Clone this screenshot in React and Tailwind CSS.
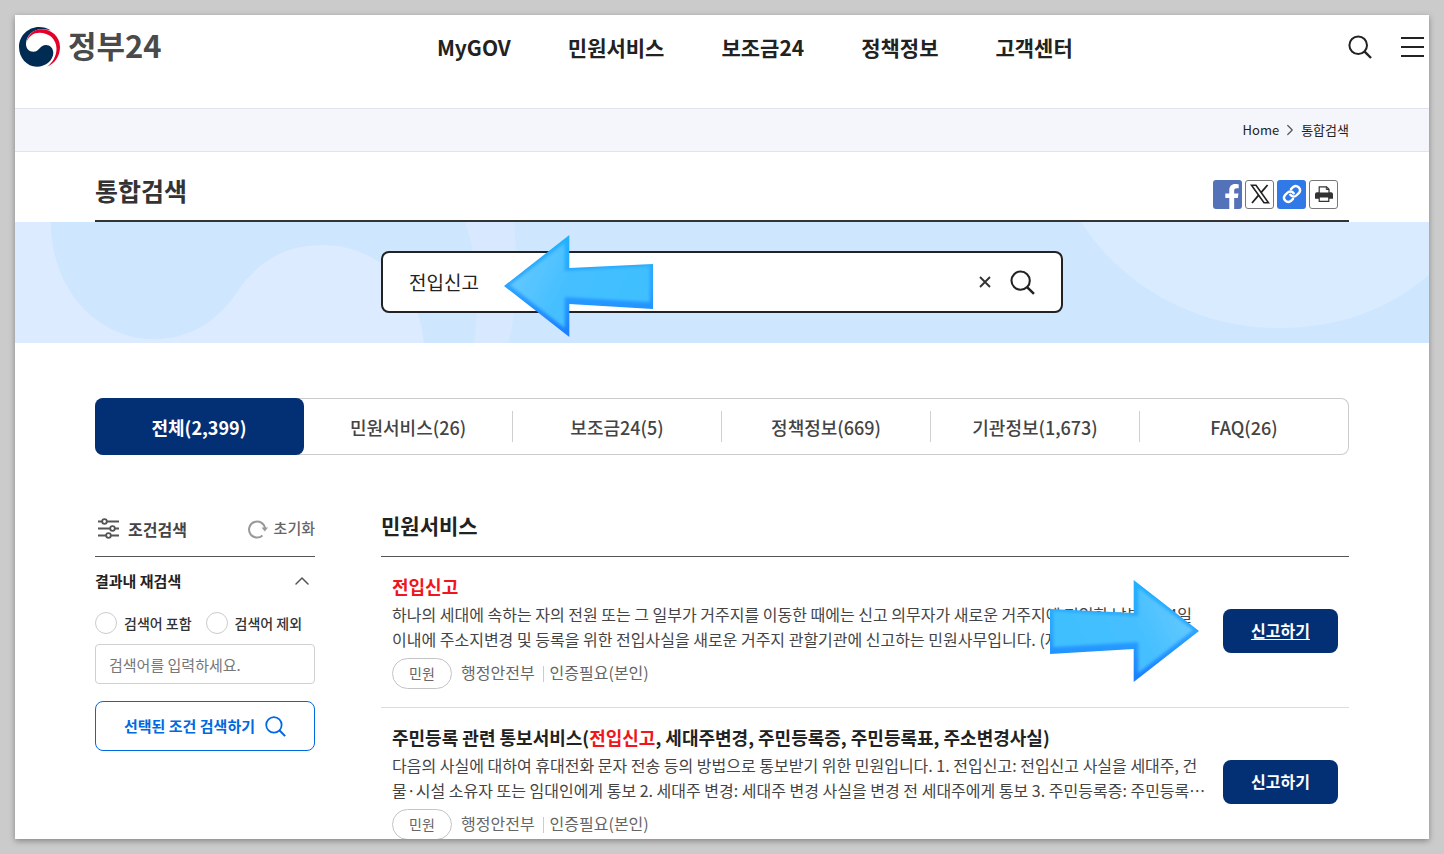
import React, { useState } from 'react';
import { FaFacebookF } from 'react-icons/fa';
import { ChevronRight, ChevronUp } from 'lucide-react';

const menus = ['MyGOV', '민원서비스', '보조금24', '정책정보', '고객센터'];

const tabs = [
    { id: 'all', label: '전체(2,399)' },
    { id: 'service', label: '민원서비스(26)' },
    { id: 'subsidy', label: '보조금24(5)' },
    { id: 'policy', label: '정책정보(669)' },
    { id: 'agency', label: '기관정보(1,673)' },
    { id: 'faq', label: 'FAQ(26)' },
];

const results = [
    {
        id: 1,
        title: ['', '전입신고', ''],
        lines: [
            '하나의 세대에 속하는 자의 전원 또는 그 일부가 거주지를 이동한 때에는 신고 의무자가 새로운 거주지에 전입한 날부터 14일',
            '이내에 주소지변경 및 등록을 위한 전입사실을 새로운 거주지 관할기관에 신고하는 민원사무입니다. (자세한 내용은 안내…',
        ],
        active: true,
    },
    {
        id: 2,
        title: ['주민등록 관련 통보서비스(', '전입신고', ', 세대주변경, 주민등록증, 주민등록표, 주소변경사실)'],
        lines: [
            '다음의 사실에 대하여 휴대전화 문자 전송 등의 방법으로 통보받기 위한 민원입니다. 1. 전입신고: 전입신고 사실을 세대주, 건',
            '물·시설 소유자 또는 임대인에게 통보 2. 세대주 변경: 세대주 변경 사실을 변경 전 세대주에게 통보 3. 주민등록증: 주민등록…',
        ],
        active: false,
    },
];

function SearchIcon({ className }) {
    return (
        <svg viewBox="0 0 24 24" fill="none" stroke="currentColor" strokeWidth="2" className={className}>
            <circle cx="10.2" cy="10.2" r="8.8" />
            <path d="M16.4 16.4 23 23" strokeWidth="2.4" />
        </svg>
    );
}

function Logo() {
    return (
        <svg viewBox="0 0 41 40" className="h-10 w-[41px]">
            <path d="M32 3.5C28.5 1 24 0 20 0 9 0 0 9 0 20s8 19.7 17.7 19.7C27 39.7 34.3 33 34.3 26c0-5-3.3-8-7.3-8-6 0-6.5 6.7-12.7 6.7C10 24.7 7 21.5 7 17 7 9 14 2.3 22 2.3c4 0 7 .3 10 1.2Z" fill="#002c54" />
            <path d="M7.5 15C9 7.5 15 2.3 22 2.3 33 2.3 41 10 41 20c0 9-5 16.5-13 19.7 6-4.5 9.500-11 9.500-18C37.500 12 30 5.700 20.500 5.700 14.500 5.700 10 9 7.500 15Z" fill="#e4002b" />
        </svg>
    );
}

function Arrow({ className, id }) {
    return (
        <svg viewBox="0 0 150 103" className={className} aria-hidden="true">
            <defs>
                <linearGradient id={id + '-body'} x1="0" y1="0" x2="1" y2="0.3">
                    <stop offset="0" stopColor="#6ccbff" />
                    <stop offset="0.5" stopColor="#45bfff" />
                    <stop offset="1" stopColor="#40bfff" />
                </linearGradient>
                <linearGradient id={id + '-edge'} x1="0" y1="0" x2="0" y2="1">
                    <stop offset="0" stopColor="#22b2ff" />
                    <stop offset="0.5" stopColor="#2aa4ff" />
                    <stop offset="1" stopColor="#1a7cff" />
                </linearGradient>
                <filter id={id + '-soft'} x="-10%" y="-10%" width="120%" height="120%">
                    <feGaussianBlur stdDeviation="1.6" />
                </filter>
                <clipPath id={id + '-clip'}>
                    <path d="M0 51 57 0V33L130 29V74L57 69V102Z" />
                </clipPath>
            </defs>
            <g clipPath={`url(#${id}-clip)`} transform="scale(1.146 1)">
                <rect width="150" height="103" fill={`url(#${id}-edge)`} />
                <path
                    d="M5 50 53 8V36L127 31V67L53 62V93Z"
                    fill={`url(#${id}-body)`}
                    filter={`url(#${id}-soft)`}
                />
            </g>
        </svg>
    );
}

function Header() {
    return (
        <header className="relative flex h-[93px] items-start justify-between pt-3 pr-[5px] pl-1">
            <a href="#home" className="flex items-start gap-2">
                <Logo />
                <span className="text-[31px] leading-9 font-bold text-[#4a4a4a]">정부24</span>
            </a>
            <nav className="flex gap-[57px] pt-1">
                {menus.map((menu) => (
                    <a key={menu} href={'#' + menu} className="text-[21px] leading-8 font-bold text-[#222]">
                        {menu}
                    </a>
                ))}
            </nav>
            <div className="flex items-center gap-7 pt-2 text-[#222]">
                <button type="button" aria-label="검색">
                    <SearchIcon className="h-6 w-6" />
                </button>
                <button type="button" aria-label="전체메뉴">
                    <svg viewBox="0 0 24 24" className="h-6 w-6" stroke="currentColor" strokeWidth="2">
                        <path d="M1 3h23M1 12h23M1 21h23" />
                    </svg>
                </button>
            </div>
        </header>
    );
}

function ShareButtons() {
    return (
        <div className="flex gap-[3px] pr-[11px]">
            <button type="button" aria-label="페이스북" className="flex h-[29px] w-[29px] items-end justify-center overflow-hidden rounded-[3px] bg-[#5472b8] pl-2 text-white">
                <FaFacebookF className="h-[25px] w-4" />
            </button>
            <button type="button" aria-label="X" className="flex h-[29px] w-[29px] items-center justify-center rounded-[3px] border border-[#777] bg-white">
                <svg viewBox="0 0 20 20" className="h-5 w-5" fill="none" stroke="#222">
                    <path d="M1.5 1.2H6L18.5 18.8H14Z" strokeWidth="1.6" />
                    <path d="M17.6 1 11 8.6M8.7 11.2 2 19" strokeWidth="1.8" />
                </svg>
            </button>
            <button type="button" aria-label="링크 복사" className="flex h-[29px] w-[29px] items-center justify-center rounded-[3px] bg-[#3079e6] text-white">
                <svg viewBox="0 0 24 24" className="h-5 w-5" fill="none" stroke="currentColor" strokeWidth="2.9" strokeLinecap="round">
                    <path d="M10 13a5 5 0 0 0 7.5.5l3-3a5 5 0 0 0-7-7l-2.7 2.7" />
                    <path d="M14 11a5 5 0 0 0-7.5-.5l-3 3a5 5 0 0 0 7 7l2.7-2.7" />
                </svg>
            </button>
            <button type="button" aria-label="인쇄" className="flex h-[29px] w-[29px] items-center justify-center rounded-[3px] border border-[#777] bg-white">
                <svg viewBox="0 0 18 16" className="h-4 w-[18px]">
                    <path d="M2 6.2h14a2 2 0 0 1 2 2v4.500H0V8.200a2 2 0 0 1 2-2Z" fill="#333" />
                    <path d="M4.200 7V.800h7.300L14 3.300V7Z" fill="#fff" stroke="#333" strokeWidth="1.2" />
                    <path d="M11.300 .8v2.700H14" fill="none" stroke="#333" />
                    <path d="M3 7h12v3H3z" fill="#333" />
                    <path d="M4.200 11h9.600v4.300H4.200z" fill="#fff" stroke="#333" strokeWidth="1.2" />
                </svg>
            </button>
        </div>
    );
}

function SearchBanner() {
    const [keyword, setKeyword] = useState('전입신고');

    return (
        <section className="relative bg-[#cfe6ff] px-20 pt-[29px] pb-[30px]">
            <svg viewBox="0 0 1414 121" preserveAspectRatio="xMidYMid slice" className="absolute inset-0 h-full w-full">
                <path d="M0 0H36C36 70 85 117 138 117C178 117 205 97 226 64C250 33 276 23 307 23C360 23 403 60 409 121H0Z" fill="#dcebff" />
                {/* left blob sits on top of the pale area */}
                <path d="M36 0C36 70 85 117 138 117C178 117 205 97 226 64C250 33 276 23 307 23V0Z" fill="#cfe6ff" />
                <path d="M450 0C464 40 464 85 459 121H493C504 80 502 40 499 0Z" fill="#d8e9ff" />
                <path d="M1066 0C1105 62 1180 106 1262 106C1325 106 1372 88 1414 53V0Z" fill="#d9ebff" />
            </svg>
            <form
                className="relative mx-auto flex h-[62px] max-w-[682px] items-center rounded-lg border-2 border-[#222] bg-white pr-[26px] pl-[26px]"
                onSubmit={(e) => e.preventDefault()}
            >
                <input
                    type="text"
                    aria-label="통합검색어"
                    value={keyword}
                    onChange={(e) => setKeyword(e.target.value)}
                    className="min-w-0 flex-1 text-[19px] text-[#222] outline-none"
                />
                <button type="button" aria-label="지우기" onClick={() => setKeyword('')} className="mr-[19px]">
                    <svg viewBox="0 0 12 12" className="h-3 w-3" stroke="#333" strokeWidth="1.9">
                        <path d="M1 1 11 11M11 1 1 11" />
                    </svg>
                </button>
                <button type="submit" aria-label="검색" className="text-[#222]">
                    <SearchIcon className="h-[25px] w-[25px]" />
                </button>
                <Arrow id="arrow-search" className="absolute top-[-18px] left-[121px] h-[103px] w-[150px]" />
            </form>
        </section>
    );
}

function Tabs() {
    const [current, setCurrent] = useState('all');

    return (
        <div className="mt-[55px] flex h-[57px] items-stretch rounded-lg bg-white shadow-[inset_0_0_0_1px_#ccc]">
            {tabs.map((tab, i) => (
                <button
                    key={tab.id}
                    type="button"
                    onClick={() => setCurrent(tab.id)}
                    className={`flex flex-1 items-center text-lg ${current === tab.id
                        ? 'rounded-lg bg-[#032f74] font-bold text-white'
                        : 'font-medium text-[#444]'
                        }`}
                >
                    <span
                        className={`flex h-[31px] flex-1 items-center justify-center border-r ${current === tab.id || i === tabs.length - 1
                            ? 'border-transparent'
                            : 'border-[#d0d0d0]'
                            }`}
                    >
                        {tab.label}
                    </span>
                </button>
            ))}
        </div>
    );
}

function Filter() {
    return (
        <aside className="w-[220px] shrink-0">
            <div className="flex h-[54px] items-center justify-between border-b border-[#555] pb-0.5">
                <h2 className="flex items-center gap-[9px] pl-[3px] text-base font-bold text-[#444]">
                    <svg viewBox="0 0 21 21" className="h-[21px] w-[21px]" fill="#fff" stroke="#555" strokeWidth="1.8">
                        <path d="M0 3.5h21M0 10.5h21M0 17.5h21" />
                        <circle cx="6.5" cy="3.5" r="2.3" />
                        <circle cx="14.5" cy="10.5" r="2.3" />
                        <circle cx="10.5" cy="17.5" r="2.3" />
                    </svg>
                    조건검색
                </h2>
                <button type="button" className="flex items-center gap-1.5 text-[15px] font-medium text-[#666]">
                    <svg viewBox="0 0 20 20" className="h-5 w-5" fill="none" stroke="#999" strokeWidth="2">
                        <path d="M14.5 16.4A8 8 0 1 1 17 9.5" />
                        <path d="M13.5 8.5h6.5L16.8 12.5Z" fill="#999" stroke="none" />
                    </svg>
                    초기화
                </button>
            </div>
            <button type="button" className="flex h-12 w-full items-center justify-between pr-px text-[15px] font-bold text-[#222]">
                결과내 재검색
                <ChevronUp className="h-6 w-6 text-[#555]" strokeWidth={1.5} />
            </button>
            <div className="mt-[7px] flex h-[22px] items-center gap-[14px] text-sm font-medium text-[#333]">
                <label className="flex items-center gap-[7px]">
                    <input type="radio" name="scope" className="h-[22px] w-[22px] appearance-none rounded-full border border-[#ccc] bg-white checked:border-[6px] checked:border-[#0067d9]" />
                    검색어 포함
                </label>
                <label className="flex items-center gap-[7px]">
                    <input type="radio" name="scope" className="h-[22px] w-[22px] appearance-none rounded-full border border-[#ccc] bg-white checked:border-[6px] checked:border-[#0067d9]" />
                    검색어 제외
                </label>
            </div>
            <input
                type="text"
                aria-label="검색어"
                placeholder="검색어를 입력하세요."
                className="mt-2.5 h-10 w-full rounded border border-[#d0d0d0] px-[13px] text-[15px] text-[#333] placeholder:text-[#777]"
            />
            <button type="button" className="mt-[17px] flex h-[50px] w-full items-center justify-center gap-2.5 rounded-lg border border-[#0068e0] text-[15px] font-bold text-[#0068e0]">
                선택된 조건 검색하기
                <SearchIcon className="h-[21px] w-[21px]" />
            </button>
        </aside>
    );
}

function ResultItem({ item }) {
    const [before, keyword, after] = item.title;

    return (
        <li className="relative flex items-center justify-between border-b border-[#ddd] px-[11px] pt-[15px] pb-[18px]">
            <div className="min-w-0">
                <h3 className="text-lg leading-7 font-bold text-[#222]">
                    <a href="#detail">
                        {before}
                        <span className="text-[#f0161d]">{keyword}</span>
                        {after}
                    </a>
                </h3>
                <p className="mt-0.5 text-base leading-[25px] whitespace-nowrap text-[#444]">
                    {item.lines[0]}
                    <br />
                    {item.lines[1]}
                </p>
                <div className="mt-1.5 flex items-center text-base text-[#666]">
                    <span className="flex h-[31px] w-[60px] items-center justify-center rounded-full border border-[#c4c4c4] pb-0.5 text-sm">
                        민원
                    </span>
                    <span className="ml-[9px] pb-[3px]">행정안전부</span>
                    <span className="ml-2 h-4 border-l border-[#ccc]" />
                    <span className="ml-1.5 pb-[3px]">인증필요(본인)</span>
                </div>
            </div>
            <button
                type="button"
                className={`h-11 w-[115px] shrink-0 rounded-lg bg-[#032f74] pb-0.5 text-base font-bold text-white ${item.active ? 'underline underline-offset-2' : ''
                    }`}
            >
                신고하기
            </button>
            {item.active && (
                <Arrow id="arrow-apply" className="absolute top-[23px] right-[150px] h-[103px] w-[150px] -scale-x-100" />
            )}
        </li>
    );
}

function App() {
    return (
        <div className="flex h-screen flex-col bg-[#cbcbcb] p-[15px] font-['Noto_Sans_CJK_KR',sans-serif]">
            <div className="flex-1 overflow-hidden bg-white shadow-[0_2px_6px_rgba(0,0,0,0.35)]">
                <Header />

                {/* Breadcrumb */}
                <div className="flex h-11 items-center justify-end gap-0.5 border-y border-[#e1e4ee] bg-[#f5f6fb] px-20 text-[13px] text-[#222]">
                    <a href="#home">Home</a>
                    <ChevronRight className="h-[18px] w-[18px] text-[#555]" strokeWidth={1.6} />
                    <span>통합검색</span>
                </div>

                <div className="px-20">
                    <div className="flex h-[70px] items-center justify-between border-b-2 border-[#333] pt-4">
                        <h1 className="pb-2 text-[25px] leading-9 font-bold text-[#333]">통합검색</h1>
                        <ShareButtons />
                    </div>
                </div>

                <SearchBanner />

                <main className="px-20">
                    <Tabs />
                    <div className="mt-12 flex gap-[66px]">
                        <Filter />
                        <section className="min-w-0 flex-1">
                            <h2 className="flex h-[54px] items-center border-b border-[#555] pb-2 text-[21px] font-bold text-[#222]">
                                민원서비스
                            </h2>
                            <ul>
                                {results.map((item) => (
                                    <ResultItem key={item.id} item={item} />
                                ))}
                            </ul>
                        </section>
                    </div>
                </main>
            </div>
        </div>
    );
}

export default App;
